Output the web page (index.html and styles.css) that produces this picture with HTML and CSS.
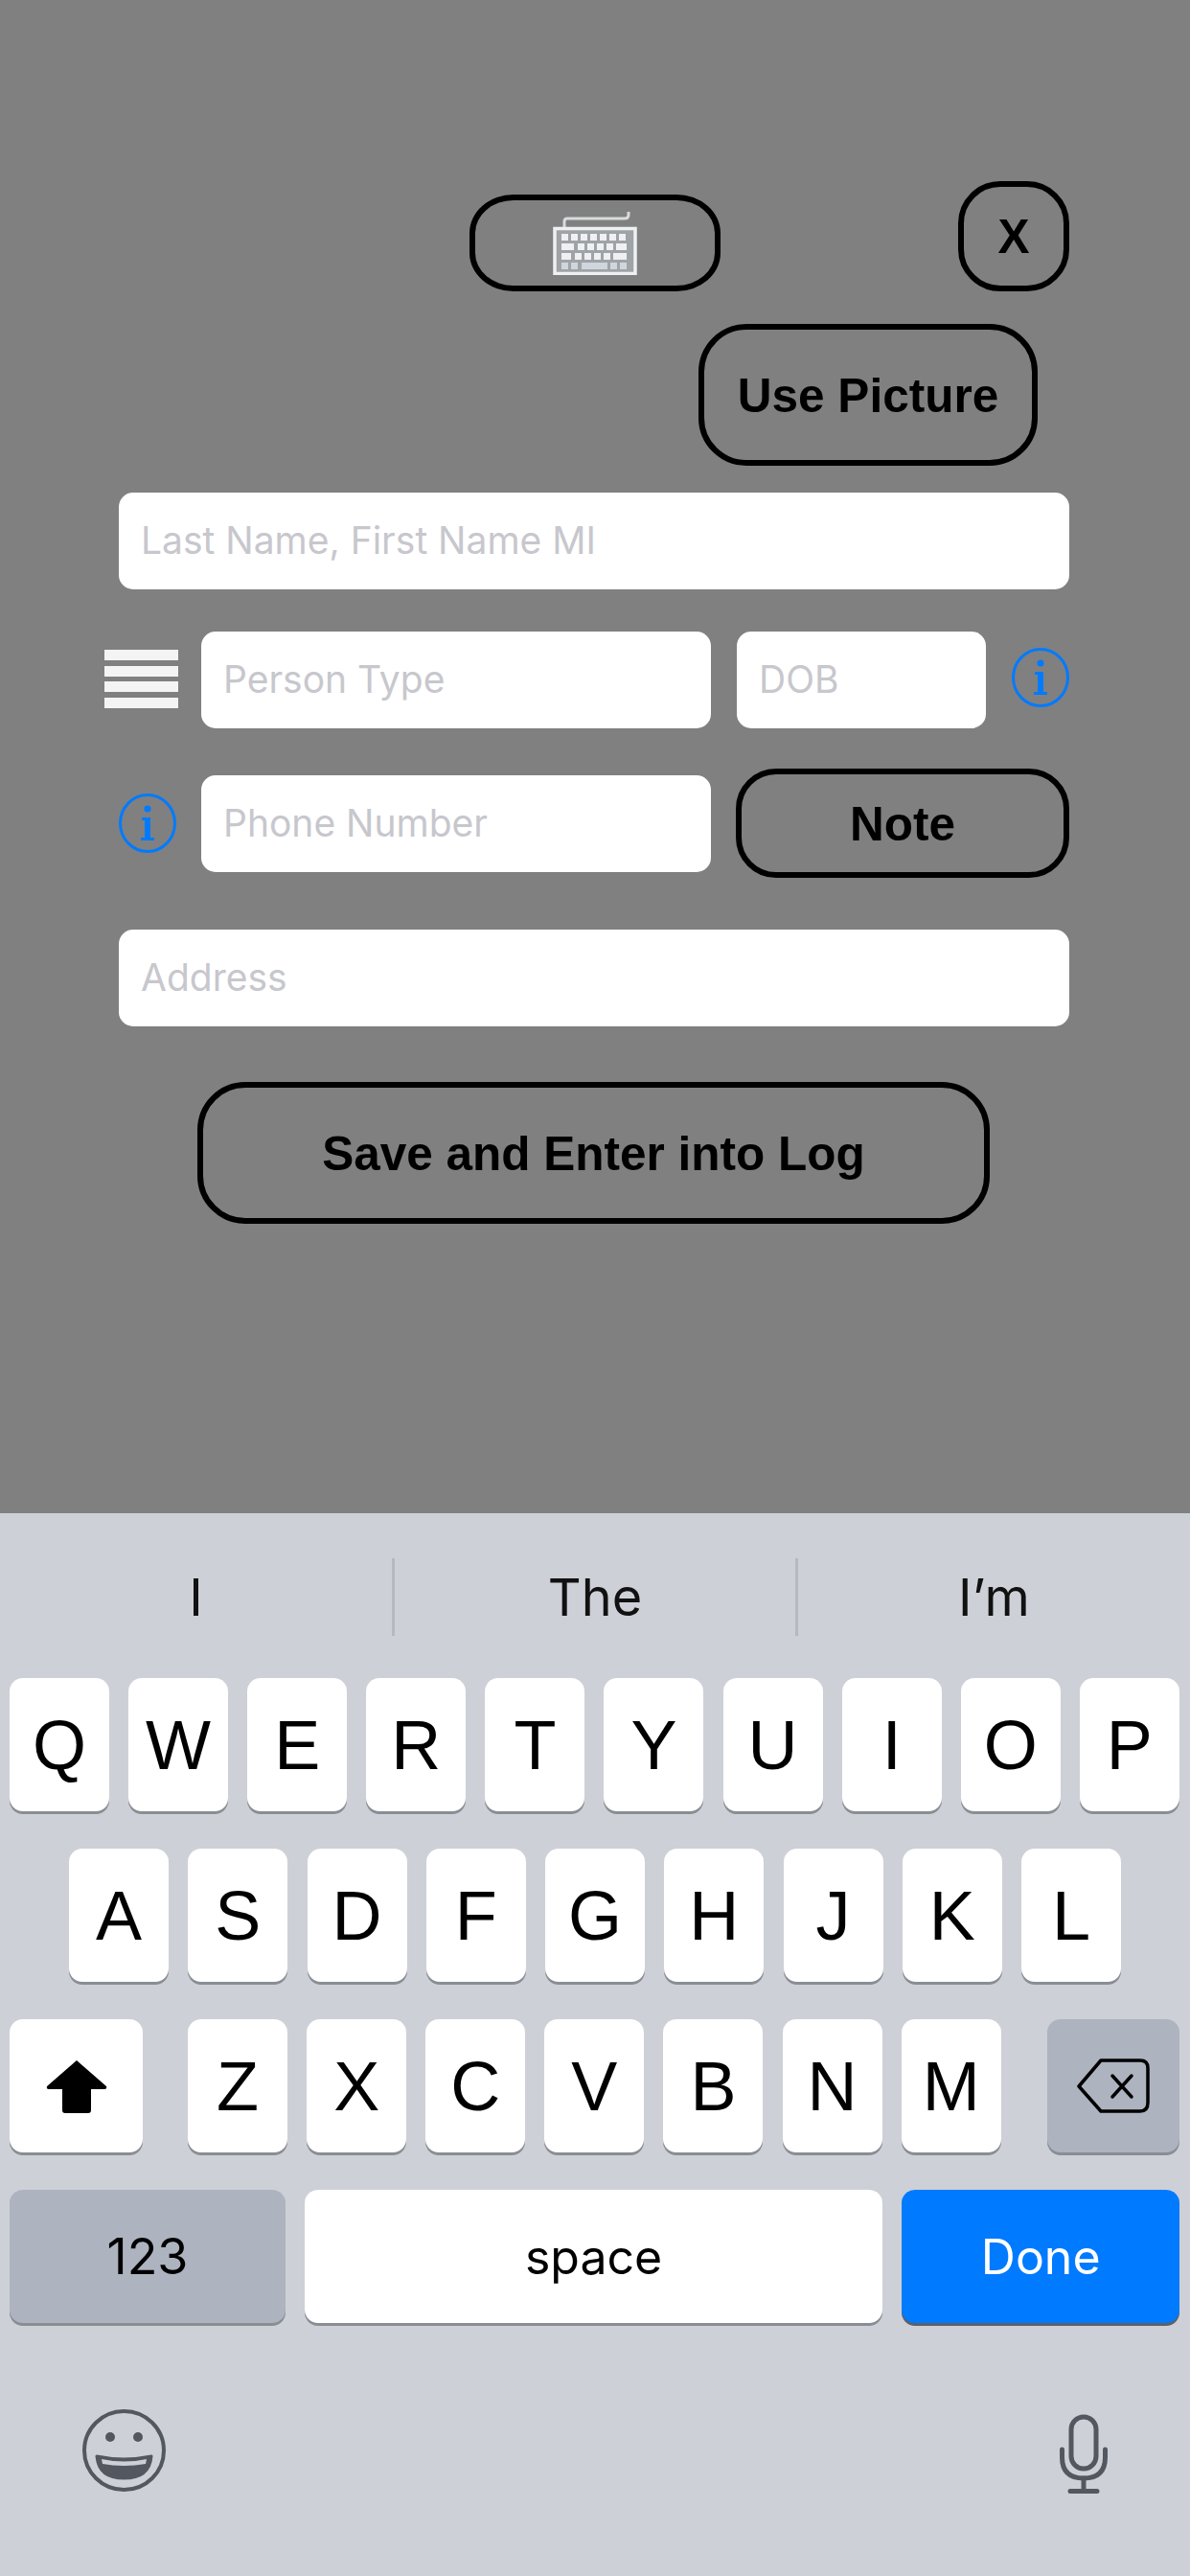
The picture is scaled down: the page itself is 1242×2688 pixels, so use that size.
FILE: index.html
```html
<!DOCTYPE html>
<html lang="en">
<head>
  <meta charset="UTF-8">
  <meta name="viewport" content="width=device-width, initial-scale=1.0">
  <title>New Person</title>
  <link rel="stylesheet" href="styles.css">
</head>
<body>
  <div class="screen">
    <div class="form">
      <div class="top-row">
        <button class="outline-btn keyboard-btn">
          <svg width="88" height="67" viewBox="0 0 88 67">
            <path d="M79 1v3q0 4-4 4H15q-3 0-3 3v7" fill="none" stroke="#d8dbde" stroke-width="3"/>
            <rect x="2" y="18.500" width="84" height="47" fill="#a0a3a6" stroke="#eef1f4" stroke-width="3.500"/>
            <g fill="#eef0f3">
              <rect x="9" y="24" width="7" height="7"/><rect x="19" y="24" width="7" height="7"/><rect x="29" y="24" width="7" height="7"/><rect x="39" y="24" width="7" height="7"/><rect x="49" y="24" width="7" height="7"/><rect x="59" y="24" width="7" height="7"/><rect x="69" y="24" width="7" height="7"/>
              <rect x="9" y="34" width="13" height="7"/><rect x="26" y="34" width="7" height="7"/><rect x="36" y="34" width="7" height="7"/><rect x="46" y="34" width="7" height="7"/><rect x="56" y="34" width="7" height="7"/><rect x="66" y="34" width="11" height="7"/>
              <rect x="9" y="44" width="10" height="7"/><rect x="23" y="44" width="7" height="7"/><rect x="33" y="44" width="7" height="7"/><rect x="43" y="44" width="7" height="7"/><rect x="53" y="44" width="7" height="7"/><rect x="63" y="44" width="14" height="7"/>
            </g>
            <g fill="#ced6de">
              <rect x="9" y="54" width="7" height="7"/><rect x="19" y="54" width="7" height="7"/><rect x="30" y="54" width="27" height="7"/><rect x="60" y="54" width="7" height="7"/><rect x="70" y="54" width="7" height="7"/>
            </g>
          </svg>
        </button>
        <button class="outline-btn close-btn">X</button>
      </div>

      <button class="outline-btn picture-btn">Use Picture</button>

      <div class="field name-field">Last Name, First Name MI</div>

      <div class="row type-row">
        <div class="menu-icon"><span></span><span></span><span></span><span></span></div>
        <div class="field wide-field">Person Type</div>
        <div class="field dob-field">DOB</div>
        <svg class="info-icon" viewBox="0 0 60 62">
          <ellipse cx="30" cy="31" rx="28.500" ry="29.500" fill="none" stroke="#007aff" stroke-width="3"/>
          <circle cx="30" cy="16" r="3.600" fill="#007aff"/>
          <path d="M24 25h9v21h4v3H23v-3h4V28h-3z" fill="#007aff"/>
        </svg>
      </div>

      <div class="row phone-row">
        <svg class="info-icon" viewBox="0 0 60 62">
          <ellipse cx="30" cy="31" rx="28.500" ry="29.500" fill="none" stroke="#007aff" stroke-width="3"/>
          <circle cx="30" cy="16" r="3.600" fill="#007aff"/>
          <path d="M24 25h9v21h4v3H23v-3h4V28h-3z" fill="#007aff"/>
        </svg>
        <div class="field wide-field">Phone Number</div>
        <button class="outline-btn note-btn">Note</button>
      </div>

      <div class="field address-field">Address</div>

      <button class="outline-btn save-btn">Save and Enter into Log</button>
    </div>

    <div class="keyboard">
      <div class="suggestions">
        <div class="suggestion">I</div>
        <div class="suggestion">The</div>
        <div class="suggestion">I’m</div>
      </div>

      <div class="key-row">
        <div class="key">Q</div><div class="key">W</div><div class="key">E</div><div class="key">R</div><div class="key">T</div><div class="key">Y</div><div class="key">U</div><div class="key">I</div><div class="key">O</div><div class="key">P</div>
      </div>
      <div class="key-row center-row">
        <div class="key">A</div><div class="key">S</div><div class="key">D</div><div class="key">F</div><div class="key">G</div><div class="key">H</div><div class="key">J</div><div class="key">K</div><div class="key">L</div>
      </div>
      <div class="key-row">
        <div class="key shift-key">
          <svg width="64" height="56" viewBox="0 0 64 56"><path d="M32 1 63 28q1 2-1 3H47v22q0 3-3 3H20q-3 0-3-3V31H2q-2-1-1-3z"/></svg>
        </div>
        <div class="key letter-first">Z</div><div class="key">X</div><div class="key">C</div><div class="key">V</div><div class="key">B</div><div class="key">N</div><div class="key">M</div>
        <div class="key gray-key delete-key">
          <svg width="76" height="58" viewBox="0 0 76 58" fill="none" stroke="#000" stroke-width="3.500" stroke-linejoin="round" stroke-linecap="round">
            <path d="M25 2H66q8 0 8 8V46q0 9-8 9H25L2 29z"/>
            <path d="M37 18 57 40M57 18 37 40"/>
          </svg>
        </div>
      </div>
      <div class="key-row">
        <div class="key gray-key small-label num-key">123</div>
        <div class="key small-label space-key">space</div>
        <div class="key small-label done-key">Done</div>
      </div>

      <div class="bottom-icons">
        <svg class="emoji-icon" width="87" height="86" viewBox="0 0 87 86">
          <ellipse cx="43.500" cy="43" rx="41.500" ry="41" fill="none" stroke="#535860" stroke-width="4"/>
          <ellipse cx="29" cy="29" rx="5" ry="5" fill="#535860"/>
          <ellipse cx="58" cy="29" rx="5" ry="5" fill="#535860"/>
          <path d="M15 49q28 6 57 0q-2 23-28.500 23T15 49z" fill="#535860" stroke="#535860" stroke-width="3" stroke-linejoin="round"/>
          <path d="M20 52q24 5 47 0l-1 5q-23 4-45 0z" fill="#cdd0d7"/>
        </svg>
        <svg class="mic-icon" width="50" height="83" viewBox="0 0 50 83" fill="none" stroke="#535860" stroke-width="5" stroke-linecap="round">
          <rect x="12" y="3" width="26" height="54" rx="13"/>
          <path d="M2.500 37v8q0 22 22.500 22t22.500-22v-8"/>
          <path d="M25 67v13M11 80.500h28"/>
        </svg>
      </div>
    </div>
  </div>
</body>
</html>
```

FILE: styles.css
```css
* {
  box-sizing: border-box;
}
body {
  margin: 0;
  padding: 0;
  font-family: 'Liberation Sans', Arial, sans-serif;
}
.screen {
  width: 1242px;
  height: 2688px;
  display: flex;
  flex-direction: column;
  overflow: hidden;
}
.form {
  height: 1579px;
  padding: 189px 126px 0 124px;
  background: #808080;
  display: flex;
  flex-direction: column;
}
.outline-btn {
  background: transparent;
  border: 6px solid #000;
  border-radius: 42px;
  padding: 0;
  color: #000;
  font-family: 'Liberation Sans', Arial, sans-serif;
  font-weight: bold;
  font-size: 49.500px;
  display: flex;
  align-items: center;
  justify-content: center;
}
.top-row {
  display: flex;
  justify-content: flex-end;
  align-items: flex-end;
}
.keyboard-btn {
  width: 262px;
  height: 101px;
  margin-right: 248px;
  border-radius: 46px / 40px;
}
.close-btn {
  width: 116px;
  height: 115px;
  border-radius: 44px;
}
.picture-btn {
  width: 354px;
  height: 148px;
  margin-top: 34px;
  margin-right: 33px;
  align-self: flex-end;
  border-radius: 50px;
}
.field {
  height: 101px;
  padding-left: 23px;
  display: flex;
  align-items: center;
  background: #fff;
  border-radius: 15px;
  color: #c7c7cd;
  font-family: Inter, 'Noto Sans', sans-serif;
  font-size: 39px;
  padding-bottom: 2px;
}
.name-field {
  margin-top: 28px;
}
.row {
  display: flex;
  align-items: center;
}
.type-row {
  margin-top: 44px;
  margin-left: -15px;
}
.type-row .info-icon {
  margin-top: -6px;
}
.menu-icon {
  width: 77px;
  margin-top: -2px;
  margin-right: 24px;
  display: flex;
  flex-direction: column;
  gap: 5.500px;
}
.menu-icon span {
  height: 11px;
  background: #f4f4f4;
}
.wide-field {
  width: 532px;
}
.dob-field {
  width: 260px;
  margin-left: 27px;
  margin-right: 27px;
}
.info-icon {
  width: 60px;
  height: 62px;
  flex: none;
}
.phone-row {
  height: 114px;
  margin-top: 42px;
}
.phone-row .info-icon {
  margin-right: 26px;
}
.note-btn {
  width: 348px;
  height: 114px;
  margin-left: 26px;
}
.address-field {
  margin-top: 54px;
}
.save-btn {
  width: 827px;
  height: 148px;
  margin-top: 58px;
  margin-left: 82px;
  border-radius: 50px;
}
.keyboard {
  flex: 1;
  padding: 0 10px;
  background: #cdd0d7;
}
.suggestions {
  display: flex;
  margin: 0 -10px;
  padding: 47px 0 44px;
}
.suggestion {
  width: 421px;
  height: 81px;
  display: flex;
  align-items: center;
  justify-content: center;
  font-family: Inter, 'Noto Sans', sans-serif;
  font-size: 54px;
  color: #111;
}
.suggestion:first-child {
  width: 409px;
}
.suggestion:last-child {
  width: 412px;
}
.suggestion + .suggestion {
  border-left: 3px solid #b5b9c1;
}
.key-row {
  display: flex;
  gap: 20.100px;
  margin-bottom: 39px;
}
.center-row {
  gap: 20.250px;
  padding-left: 62px;
}
.key {
  width: 104px;
  height: 139px;
  display: flex;
  align-items: center;
  justify-content: center;
  background: #fff;
  border-radius: 14px;
  box-shadow: 0 3px 0 #898d94;
  font-size: 72px;
  color: #000;
}
.shift-key {
  width: 139px;
}
.letter-first {
  margin-left: 27px;
}
.gray-key {
  background: #adb3bf;
}
.delete-key {
  width: 138px;
  margin-left: 28px;
}
.small-label {
  font-family: Inter, 'Noto Sans', sans-serif;
  font-size: 50px;
}
.num-key {
  width: 288px;
  font-size: 52px;
}
.space-key {
  width: 603px;
}
.done-key {
  width: 290px;
  background: #007aff;
  color: #fff;
  box-shadow: 0 3px 0 #5c6068;
}
.bottom-icons {
  display: flex;
  justify-content: space-between;
  align-items: flex-start;
  padding: 51px 76px 0;
}
.mic-icon {
  margin-top: 5px;
}
```
